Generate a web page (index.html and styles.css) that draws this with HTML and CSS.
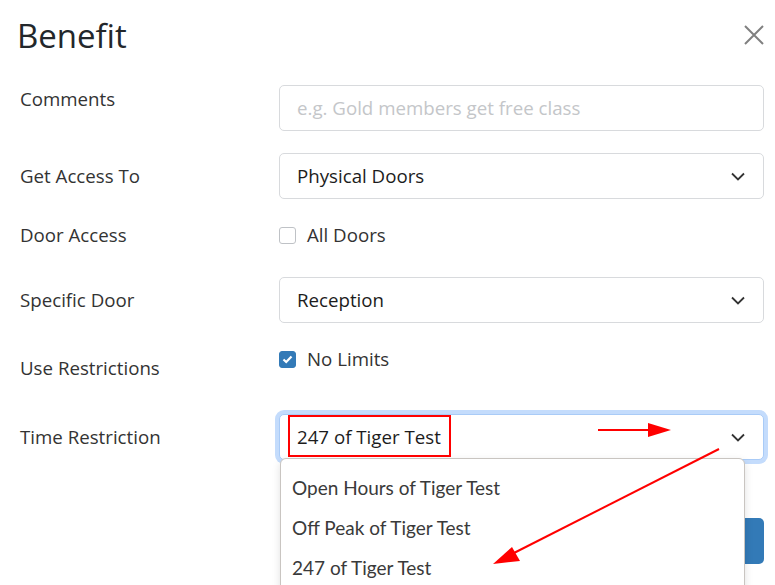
FILE: index.html
```html
<!DOCTYPE html>
<html lang="en">
<head>
<meta charset="utf-8">
<title>Benefit</title>
<link rel="stylesheet" href="styles.css">
</head>
<body>
<div class="modal">
  <header class="modal-header">
    <h1 class="modal-title">Benefit</h1>
    <button class="close" aria-label="Close">
      <svg width="20" height="20" viewBox="0 0 20 20"><path d="M1 1L19 19M19 1L1 19" stroke="#808080" stroke-width="2" fill="none"/></svg>
    </button>
  </header>

  <div class="form">
    <div class="row row-comments">
      <label class="label">Comments</label>
      <div class="control"><div class="input placeholder">e.g. Gold members get free class</div></div>
    </div>

    <div class="row row-access">
      <label class="label">Get Access To</label>
      <div class="control">
        <div class="select"><span>Physical Doors</span>
          <svg class="chev" width="14" height="9" viewBox="0 0 14 9"><path d="M1 1.5L7 7.5L13 1.5" stroke="#333" stroke-width="1.8" fill="none"/></svg>
        </div>
      </div>
    </div>

    <div class="row row-door">
      <label class="label">Door Access</label>
      <div class="control check-line">
        <span class="box"></span><span>All Doors</span>
      </div>
    </div>

    <div class="row row-specific">
      <label class="label">Specific Door</label>
      <div class="control">
        <div class="select"><span>Reception</span>
          <svg class="chev" width="14" height="9" viewBox="0 0 14 9"><path d="M1 1.5L7 7.5L13 1.5" stroke="#333" stroke-width="1.8" fill="none"/></svg>
        </div>
      </div>
    </div>

    <div class="row row-use">
      <label class="label">Use Restrictions</label>
      <div class="control check-line">
        <span class="box checked">
          <svg width="11" height="9" viewBox="0 0 11 9"><path d="M1.5 4.5L4.2 7L9.5 1.5" stroke="#fff" stroke-width="2.2" fill="none"/></svg>
        </span><span>No Limits</span>
      </div>
    </div>

    <div class="row row-time">
      <label class="label">Time Restriction</label>
      <div class="control time-control">
        <div class="select focused"><span>247 of Tiger Test</span>
          <svg class="chev" width="14" height="9" viewBox="0 0 14 9"><path d="M1 1.5L7 7.5L13 1.5" stroke="#333" stroke-width="1.8" fill="none"/></svg>
        </div>
        <div class="save-btn"></div>
        <ul class="menu">
          <li>Open Hours of Tiger Test</li>
          <li>Off Peak of Tiger Test</li>
          <li>247 of Tiger Test</li>
        </ul>
      </div>
    </div>
  </div>
</div>

<svg class="annot" width="775" height="585" viewBox="0 0 775 585">
  <rect x="289" y="416" width="161" height="40" fill="none" stroke="#ff0000" stroke-width="2"/>
  <line x1="598" y1="430" x2="652" y2="430" stroke="#ff0000" stroke-width="2"/>
  <polygon points="648,423 671,430 648,437" fill="#ff0000"/>
  <line x1="719" y1="449" x2="510" y2="555" stroke="#ff0000" stroke-width="2"/>
  <polygon points="493,564 512,547 520,561" fill="#ff0000"/>
</svg>
</body>
</html>
```

FILE: styles.css
```css
* { box-sizing: border-box; }

html, body {
  margin: 0;
  padding: 0;
  background: #fff;
  overflow: hidden;
}

body {
  width: 775px;
  height: 585px;
  font-family: "Open Sans", "Noto Sans", sans-serif;
  color: #333;
  position: relative;
}

.modal {
  padding: 0 11px 0 20px;
  height: 585px;
  overflow: hidden;
}

.modal-header {
  display: flex;
  justify-content: space-between;
  align-items: flex-start;
  height: 85px;
}

.modal-title {
  margin: 13px 0 0 -3px;
  font-size: 33px;
  font-weight: 400;
  line-height: 46px;
  color: #23272b;
}

.close {
  border: 0;
  background: none;
  padding: 0;
  margin: 25px 0 0 0;
  width: 20px;
  height: 20px;
  cursor: pointer;
}
.close svg { display: block; }

.form {
  display: flex;
  flex-direction: column;
}

.row {
  display: grid;
  grid-template-columns: 259px 485px;
  align-items: start;
}

.label {
  font-size: 18.7px;
  line-height: 24px;
  color: #333;
}

.control {
  font-size: 18.7px;
  line-height: 24px;
}

.input, .select {
  height: 46px;
  border: 1px solid #d8dadd;
  border-radius: 5px;
  background: #fff;
  display: flex;
  align-items: center;
  padding: 0 18px 0 17px;
  font-size: 18.7px;
  color: #1c1c1c;
}

.placeholder { color: #c4c6c9; }

.select { justify-content: space-between; }
.chev { display: block; margin-right: 0; }

.row-comments .label { padding-top: 2px; }

.row-access { margin-top: 22px; }
.row-access .label { padding-top: 11px; }

.row-door { margin-top: 24px; }
.row-door .label { padding-top: 0; }

.check-line {
  display: flex;
  align-items: center;
  gap: 11px;
  color: #333;
}

.box {
  width: 17px;
  height: 17px;
  border: 1px solid #bfc2c6;
  border-radius: 3px;
  background: #fff;
  display: flex;
  align-items: center;
  justify-content: center;
}
.box.checked {
  background: #337ab7;
  border-color: #337ab7;
}
.box svg { display: block; }

.row-specific { margin-top: 30px; }
.row-specific .label { padding-top: 11px; }

.row-use { margin-top: 25px; }
.row-use .label { padding-top: 8px; }
.row-use .check-line { margin-top: -1px; }

.row-time { margin-top: 34px; }
.row-time .label { padding-top: 11px; }

.time-control { position: relative; }

.select.focused {
  border-color: #a9cbf7;
  box-shadow: 0 0 0 4px #c4dcfc;
}

.save-btn {
  margin: 58px 0 0 auto;
  width: 40px;
  height: 46px;
  background: #337ab7;
  border-radius: 5px;
}

.menu {
  position: absolute;
  left: 1px;
  top: 44px;
  width: 465px;
  height: 140px;
  margin: 0;
  padding: 9px 0 0 0;
  list-style: none;
  background: #fff;
  border: 1px solid #c9c5c1;
  border-radius: 6px;
  box-shadow: 0 3px 8px rgba(0,0,0,0.12);
  font-family: "Lato", "Open Sans", sans-serif;
  font-size: 19px;
  color: #3a3a3a;
}

.menu li {
  height: 40px;
  line-height: 40px;
  padding-left: 11px;
}

.annot {
  position: absolute;
  left: 0;
  top: 0;
  pointer-events: none;
}
```
